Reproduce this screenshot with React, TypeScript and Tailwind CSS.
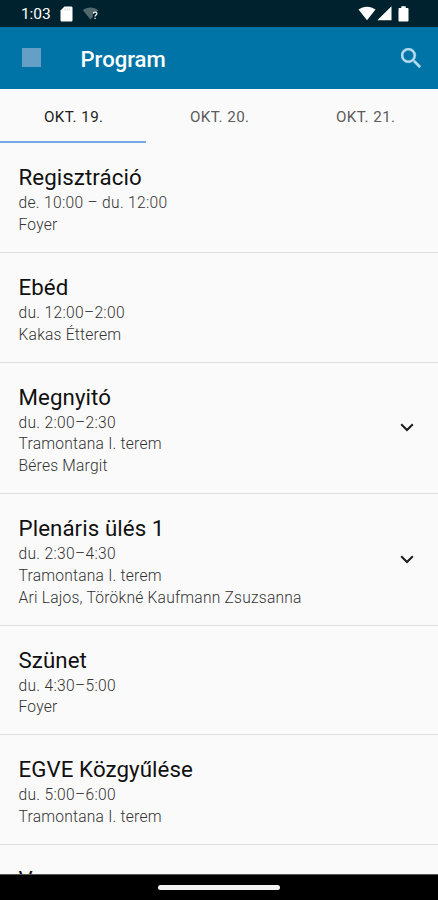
import clsx from 'clsx';

interface Session {
  title: string;
  time?: string;
  place?: string;
  speakers?: string;
}

const DAYS = ['OKT. 19.', 'OKT. 20.', 'OKT. 21.'];

const SESSIONS: Session[] = [
  { title: 'Regisztráció', time: 'de. 10:00 – du. 12:00', place: 'Foyer' },
  { title: 'Ebéd', time: 'du. 12:00–2:00', place: 'Kakas Étterem' },
  { title: 'Megnyitó', time: 'du. 2:00–2:30', place: 'Tramontana I. terem', speakers: 'Béres Margit' },
  {
    title: 'Plenáris ülés 1',
    time: 'du. 2:30–4:30',
    place: 'Tramontana I. terem',
    speakers: 'Ari Lajos, Törökné Kaufmann Zsuzsanna',
  },
  { title: 'Szünet', time: 'du. 4:30–5:00', place: 'Foyer' },
  { title: 'EGVE Közgyűlése', time: 'du. 5:00–6:00', place: 'Tramontana I. terem' },
  { title: 'V' },
];

function StatusBar() {
  return (
    <div className="flex h-[27px] shrink-0 items-center bg-[#00222e] pl-[21px] pr-[29px] text-white">
      <span className="w-[31px] pt-[3px] text-[15.5px] leading-none tracking-[-0.1px]">1:03</span>
      <svg className="ml-[8px]" width="13" height="16" viewBox="0 0 13 16" fill="currentColor">
        <path d="M4.5.5h6.7c.7 0 1.3.6 1.3 1.3v12.4c0 .7-.6 1.3-1.3 1.3H1.8c-.7 0-1.3-.6-1.3-1.3V4.5z" />
        <path d="M5 2.5v2M7.3 2.5v2M9.6 2.5v2" stroke="#b5c0c4" strokeWidth="0.8" />
      </svg>
      <svg className="ml-[9px]" width="18" height="15" viewBox="0 0 18 15">
        <path d="M.8 4.2C5 .6 12 .6 16.2 4.2L14 7h-3.2v4L8.5 13.5z" fill="#52686f" />
        <path d="M11.3 7.6c.2-2 3.6-1.9 3.5.1 0 1.2-1.7 1.4-1.7 2.8M13.1 11.7v1.4" fill="none" stroke="#e7ecee" strokeWidth="1.4" />
      </svg>
      <div className="ml-auto flex items-center">
        <svg width="18" height="15" viewBox="0 0 18 15" fill="currentColor">
          <path d="M.5 3.6C5.2-.3 12.8-.3 17.5 3.6L9 14.3z" />
        </svg>
        <svg className="ml-[1px]" width="15" height="15" viewBox="0 0 15 15" fill="currentColor">
          <path d="M14.5.3v14H.3z" />
        </svg>
        <svg className="ml-[6px]" width="11" height="16" viewBox="0 0 11 16" fill="currentColor">
          <path d="M3.3.3h4.4v1.6h1.8c.6 0 1 .4 1 1v11.6c0 .6-.4 1-1 1h-8c-.6 0-1-.4-1-1V2.9c0-.6.4-1 1-1h1.8z" />
        </svg>
      </div>
    </div>
  );
}

function AppBar() {
  return (
    <header className="flex h-[62px] shrink-0 items-center bg-[#0074a6] pl-[21.5px] pr-[17px]">
      <div className="mb-[1px] size-[19px] bg-[#669fc5]" />
      <h1 className="ml-[40px] pt-[1px] text-[22.1px] leading-[26px] font-medium text-white">Program</h1>
      <button className="mb-[1px] ml-auto text-[#b7dcf0]" aria-label="Keresés">
        <svg width="20" height="20" viewBox="3 3 17.5 17.5" fill="currentColor" stroke="currentColor" strokeWidth="0.3">
          <path d="M15.5 14h-.79l-.28-.27A6.471 6.471 0 0 0 16 9.5 6.5 6.5 0 1 0 9.5 16c1.61 0 3.09-.59 4.23-1.57l.27.28v.79l5 4.99L20.49 19l-4.99-5zm-6 0C7.01 14 5 11.99 5 9.5S7.01 5 9.5 5 14 7.01 14 9.5 11.99 14 9.5 14z" />
        </svg>
      </button>
    </header>
  );
}

function DayTabs() {
  return (
    <nav className="grid h-[54px] shrink-0 grid-cols-3">
      {DAYS.map((day, i) => (
        <button
          key={day}
          className={clsx(
            'border-b-2 pt-[5px] pl-[1.5px] text-[15.2px] tracking-[0.4px]',
            i === 0 ? 'border-[#74a9e8] text-[#222222]' : 'border-transparent text-[#5c5c5c]',
          )}
        >
          {day}
        </button>
      ))}
    </nav>
  );
}

function SessionRow({ session }: { session: Session }) {
  return (
    <li className="flex shrink-0 items-center border-b border-[#dedede] pt-[21px] pb-[15.4px] pl-[18.5px] pr-[24px]">
      <div className="flex-1 text-[15.6px] leading-[21.7px] font-light tracking-[0.22px] text-[#333333]">
        <h2 className="mb-[2px] text-[22.3px] leading-[27px] font-normal tracking-[0.07px] text-[#111111]">
          {session.title}
        </h2>
        {session.time && <p className="tracking-[0.31px]">{session.time}</p>}
        {session.place && <p>{session.place}</p>}
        {session.speakers && <p>{session.speakers}</p>}
      </div>
      {session.speakers && (
        <svg className="mb-[6px]" width="14" height="9" viewBox="0 0 14 9" fill="none" stroke="#1c1c1c" strokeWidth="2">
          <path d="M1.2 1.2 7 7l5.8-5.8" />
        </svg>
      )}
    </li>
  );
}

export default function App() {
  return (
    <div className="flex h-[900px] w-full flex-col overflow-hidden bg-[#fafafa] font-['Roboto',sans-serif]">
      <StatusBar />
      <AppBar />
      <DayTabs />
      <ul className="flex min-h-0 flex-1 flex-col overflow-hidden pt-[0.1px]">
        {SESSIONS.map((session) => (
          <SessionRow key={session.title} session={session} />
        ))}
      </ul>
      <div className="flex h-[26px] shrink-0 items-center justify-center border-t border-[#555555] bg-black">
        <div className="h-[5px] w-[122px] rounded-full bg-[#f4f4f4]" />
      </div>
    </div>
  );
}
